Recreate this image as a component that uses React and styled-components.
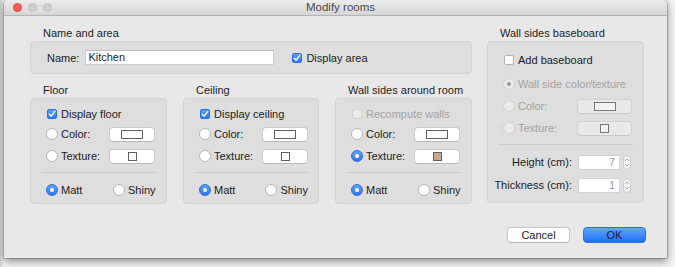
import React from "react";
import styled, { createGlobalStyle, css } from "styled-components";

const GlobalStyle = createGlobalStyle`
  html, body { margin: 0; padding: 0; background: #f7f7f7; }
  body { font-family: "Liberation Sans", Arial, sans-serif; font-size: 11px; color: #1c1c1c; }
  * { box-sizing: border-box; }
`;

const Page = styled.div`
  width: 675px;
  height: 267px;
  padding-left: 4px;
  overflow: hidden;
  background: linear-gradient(90deg, #cfcfcf 0px, #f4f4f4 4px, #f4f4f4 100%);
`;

const Window = styled.div`
  width: 663px;
  height: 258px;
  background: #e8e8e8;
  border-radius: 4px 4px 0 0;
  box-shadow: 0 0 0 1px rgba(0, 0, 0, 0.18), 0 3px 9px rgba(0, 0, 0, 0.45);
  display: flex;
  flex-direction: column;
`;

const TitleBar = styled.div`
  height: 16px;
  flex: none;
  display: flex;
  align-items: center;
  padding-left: 9px;
  background: linear-gradient(#ececec, #d6d6d6);
  border-bottom: 1px solid #b4b4b4;
  border-radius: 4px 4px 0 0;
`;

const Lights = styled.div`
  display: flex;
  gap: 6px;
  margin-top: -1px;
`;

const Light = styled.span`
  width: 9px;
  height: 9px;
  border-radius: 50%;
  background: ${(p) => (p.$red ? "#fc5f57" : "#d0d0d0")};
  border: 0.5px solid ${(p) => (p.$red ? "#e2463f" : "#c2c2c2")};
`;

const Title = styled.div`
  flex: 1;
  text-align: center;
  font-size: 11.5px;
  color: #4a4a4a;
  margin-left: -38px;
  margin-top: -1px;
`;

const Body = styled.div`
  flex: 1;
  display: flex;
  flex-direction: column;
  padding: 11px 23px 15px 26px;
`;

const Main = styled.div`
  display: flex;
  gap: 15px;
  align-items: flex-start;
`;

const LeftCol = styled.div`
  width: 442px;
  display: flex;
  flex-direction: column;
`;

const RightCol = styled.div`
  width: 157px;
  display: flex;
  flex-direction: column;
`;

const Section = styled.div`
  display: flex;
  flex-direction: column;
  margin-top: ${(p) => p.$top || 0}px;
`;

const SectionLabel = styled.div`
  height: 14px;
  line-height: 13px;
  padding-left: 13px;
  color: #1c1c1c;
  white-space: nowrap;
`;

const GroupBox = styled.div`
  background: #dedede;
  border: 1px solid #d4d4d4;
  border-radius: 4px;
`;

const NameBox = styled(GroupBox)`
  height: 33px;
  display: flex;
  align-items: center;
  padding-left: 16px;
`;

const NameLabel = styled.span`
  margin-right: 6px;
`;

const TextField = styled.div`
  width: 189px;
  height: 15px;
  background: #fff;
  border: 1px solid #cfcfcf;
  border-top-color: #bdbdbd;
  line-height: 13px;
  padding-left: 2px;
  margin-right: 16px;
`;

const Columns = styled.div`
  display: grid;
  grid-template-columns: 137px 136px 137px;
  gap: 16px;
`;

const OptionsBox = styled(GroupBox)`
  height: ${(p) => p.$height}px;
  display: flex;
  flex-direction: column;
  padding: ${(p) => p.$padTop}px 10px 0 10px;
`;

const Row = styled.div`
  height: ${(p) => p.$h || 16}px;
  display: flex;
  align-items: center;
  padding-left: 4px;
  white-space: nowrap;
  margin-top: ${(p) => p.$gap || 0}px;
  color: ${(p) => (p.$disabled ? "#a3a3a3" : "#1c1c1c")};
`;

const Separator = styled.div`
  height: 1px;
  background: #cbcbcb;
  margin: 8px 0 9px;
`;

const Slot = styled.span`
  width: 13px;
  display: flex;
  justify-content: center;
  margin-right: 3px;
  flex: none;
`;

const Box = styled.span`
  width: 10px;
  height: 10px;
  border-radius: 2px;
  display: flex;
  align-items: center;
  justify-content: center;
  ${(p) =>
    p.$checked
      ? css`
          background: linear-gradient(#5a9ff9, #2b78f2);
          border: 1px solid #2f6fdc;
        `
      : p.$disabled
      ? css`
          background: #ececec;
          border: 1px solid #d3d3d3;
        `
      : css`
          background: #fff;
          border: 1px solid #b4b4b4;
        `}
`;

const Round = styled.span`
  width: 12px;
  height: 12px;
  border-radius: 50%;
  display: flex;
  align-items: center;
  justify-content: center;
  ${(p) =>
    p.$checked && !p.$disabled
      ? css`
          background: linear-gradient(#5ea3fa, #2a76f1);
          border: 1px solid #2f70dd;
        `
      : p.$disabled
      ? css`
          background: #ebebeb;
          border: 1px solid #d3d3d3;
        `
      : css`
          background: #fff;
          border: 1px solid #b7b7b7;
        `}
  &::after {
    content: "";
    display: ${(p) => (p.$checked ? "block" : "none")};
    width: 4px;
    height: 4px;
    border-radius: 50%;
    background: ${(p) => (p.$disabled ? "#9a9a9a" : "#fff")};
  }
`;

const Check = ({ checked, disabled }) => (
  <Slot>
    <Box $checked={checked} $disabled={disabled}>
      {checked && (
        <svg width="8" height="8" viewBox="0 0 8 8">
          <path d="M1.3 4.2 L3.2 6.2 L6.8 1.4" fill="none" stroke="#fff" strokeWidth="1.4" strokeLinecap="round" strokeLinejoin="round" />
        </svg>
      )}
    </Box>
  </Slot>
);

const Radio = ({ checked, disabled }) => (
  <Slot>
    <Round $checked={checked} $disabled={disabled} />
  </Slot>
);

const FieldLabel = styled.span`
  width: ${(p) => p.$w}px;
  flex: none;
`;

const SwatchButton = styled.span`
  width: ${(p) => p.$w}px;
  height: 15px;
  border-radius: 4px;
  display: flex;
  align-items: center;
  justify-content: center;
  background: ${(p) => (p.$disabled ? "#e9e9e9" : "#fff")};
  border: 1px solid ${(p) => (p.$disabled ? "#d2d2d2" : "#cacaca")};
  border-bottom-color: ${(p) => (p.$disabled ? "#c8c8c8" : "#b9b9b9")};
`;

const Swatch = styled.span`
  width: ${(p) => (p.$square ? 9 : 22)}px;
  height: 9px;
  border: 1.3px solid #616161;
  background: ${(p) => p.$fill || "#fff"};
  ${(p) => p.$disabled && css`border-color: #777; background: #f3f3f3;`}
`;

const Option = styled.span`
  display: flex;
  align-items: center;
  width: ${(p) => p.$w || "auto"};
`;

const NumLabel = styled.span`
  width: 80px;
  text-align: right;
  white-space: nowrap;
  flex: none;
  margin-left: -10px;
`;

const NumField = styled.span`
  width: 42px;
  height: 15px;
  margin-left: 6px;
  background: #fff;
  border: 1px solid #d3d3d3;
  color: #9d9d9d;
  text-align: right;
  padding-right: 4px;
  line-height: 13px;
`;

const Spinner = styled.span`
  width: 8px;
  height: 15px;
  margin-left: 3px;
  border: 1px solid #cdcdcd;
  border-radius: 4px;
  background: #f4f4f4;
  display: flex;
  align-items: center;
  justify-content: center;
`;

const Footer = styled.div`
  display: flex;
  justify-content: flex-end;
  gap: 13px;
  margin-top: 23px;
  margin-right: -2px;
`;

const Button = styled.button`
  width: 63px;
  height: 16px;
  padding: 0;
  font-family: inherit;
  font-size: 11px;
  color: #1c1c1c;
  border-radius: 4px;
  ${(p) =>
    p.$primary
      ? css`
          background: linear-gradient(#62a6fb, #1d6ef5);
          border: 1px solid #2b6ee0;
        `
      : css`
          background: #fff;
          border: 1px solid #c6c6c6;
          border-bottom-color: #b4b4b4;
        `}
`;

const SpinIcon = () => (
  <svg width="6" height="11" viewBox="0 0 6 11">
    <path d="M1.2 3.8 L3 2 L4.8 3.8 M1.2 7.2 L3 9 L4.8 7.2" fill="none" stroke="#9a9a9a" strokeWidth="0.9" />
  </svg>
);

const MaterialGroup = ({ title, first, colorSel, textureFill }) => (
  <Section $top={10}>
    <SectionLabel>{title}</SectionLabel>
    <OptionsBox $height={106} $padTop={8}>
      <Row $h={14} $disabled={first.disabled}>
        <Check checked={first.checked} disabled={first.disabled} />
        {first.label}
      </Row>
      <Row $gap={5}>
        <Radio checked={colorSel === "color"} />
        <FieldLabel $w={48}>Color:</FieldLabel>
        <SwatchButton $w={46}><Swatch /></SwatchButton>
      </Row>
      <Row $gap={6}>
        <Radio checked={colorSel === "texture"} />
        <FieldLabel $w={48}>Texture:</FieldLabel>
        <SwatchButton $w={46}><Swatch $square $fill={textureFill} /></SwatchButton>
      </Row>
      <Separator />
      <Row>
        <Option $w="67px">
          <Radio checked />
          Matt
        </Option>
        <Option>
          <Radio />
          Shiny
        </Option>
      </Row>
    </OptionsBox>
  </Section>
);

export default function App() {
  return (
    <>
      <GlobalStyle />
      <Page>
        <Window>
          <TitleBar>
            <Lights>
              <Light $red />
              <Light />
              <Light />
            </Lights>
            <Title>Modify rooms</Title>
          </TitleBar>
          <Body>
            <Main>
              <LeftCol>
                <Section>
                  <SectionLabel>Name and area</SectionLabel>
                  <NameBox>
                    <NameLabel>Name:</NameLabel>
                    <TextField>Kitchen</TextField>
                    <Check checked />
                    Display area
                  </NameBox>
                </Section>
                <Columns>
                  <MaterialGroup title="Floor" first={{ label: "Display floor", checked: true }} />
                  <MaterialGroup title="Ceiling" first={{ label: "Display ceiling", checked: true }} />
                  <MaterialGroup
                    title="Wall sides around room"
                    first={{ label: "Recompute walls", disabled: true }}
                    colorSel="texture"
                    textureFill="#c9a893"
                  />
                </Columns>
              </LeftCol>
              <RightCol>
                <Section>
                  <SectionLabel>Wall sides baseboard</SectionLabel>
                  <OptionsBox $height={162} $padTop={10}>
                    <Row>
                      <Check />
                      Add baseboard
                    </Row>
                    <Row $gap={8} $disabled>
                      <Radio checked disabled />
                      Wall side color/texture
                    </Row>
                    <Row $gap={6} $disabled>
                      <Radio disabled />
                      <FieldLabel $w={59}>Color:</FieldLabel>
                      <SwatchButton $w={55} $disabled><Swatch $disabled /></SwatchButton>
                    </Row>
                    <Row $gap={6} $disabled>
                      <Radio disabled />
                      <FieldLabel $w={59}>Texture:</FieldLabel>
                      <SwatchButton $w={55} $disabled><Swatch $square $disabled /></SwatchButton>
                    </Row>
                    <Separator />
                    <Row>
                      <NumLabel>Height (cm):</NumLabel>
                      <NumField>7</NumField>
                      <Spinner><SpinIcon /></Spinner>
                    </Row>
                    <Row $gap={7}>
                      <NumLabel>Thickness (cm):</NumLabel>
                      <NumField>1</NumField>
                      <Spinner><SpinIcon /></Spinner>
                    </Row>
                  </OptionsBox>
                </Section>
              </RightCol>
            </Main>
            <Footer>
              <Button>Cancel</Button>
              <Button $primary>OK</Button>
            </Footer>
          </Body>
        </Window>
      </Page>
    </>
  );
}
